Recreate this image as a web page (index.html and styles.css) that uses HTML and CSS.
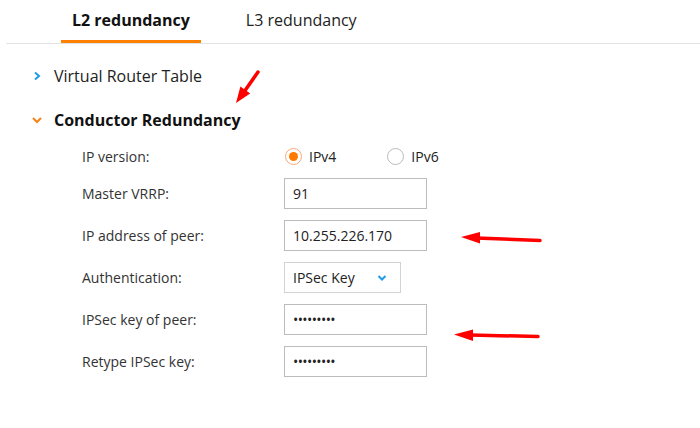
FILE: index.html
```html
<!DOCTYPE html>
<html lang="en">
<head>
    <meta charset="UTF-8">
    <meta name="viewport" content="width=device-width, initial-scale=1.0">
    <title>Redundancy</title>
    <link rel="stylesheet" href="styles.css">
</head>
<body>

<div class="tabs">
    <div class="tab active">L2 redundancy</div>
    <div class="tab">L3 redundancy</div>
</div>

<div class="section">
    <div class="section-head">
        <svg class="chevron" width="10" height="10" viewBox="0 0 10 10"><polyline points="3,1.5 7,5 3,8.5" fill="none" stroke="#1e9be9" stroke-width="2"/></svg>
        <span>Virtual Router Table</span>
    </div>
    <div class="section-head open">
        <svg class="chevron" width="10" height="10" viewBox="0 0 10 10"><polyline points="1,3 5,7 9,3" fill="none" stroke="#f7821b" stroke-width="2"/></svg>
        <span>Conductor Redundancy</span>
    </div>

    <div class="form">
        <div class="row radio-row">
            <label>IP version:</label>
            <div class="radios">
                <span class="radio checked"><span class="dot"></span></span><span class="radio-text">IPv4</span>
                <span class="radio"></span><span class="radio-text">IPv6</span>
            </div>
        </div>
        <div class="row">
            <label>Master VRRP:</label>
            <input type="text" class="field" value="91">
        </div>
        <div class="row">
            <label>IP address of peer:</label>
            <input type="text" class="field" value="10.255.226.170">
        </div>
        <div class="row">
            <label>Authentication:</label>
            <div class="select">
                <span>IPSec Key</span>
                <svg width="10" height="8" viewBox="0 0 10 8"><polyline points="1.5,2 5,5.5 8.5,2" fill="none" stroke="#1e9be9" stroke-width="2"/></svg>
            </div>
        </div>
        <div class="row">
            <label>IPSec key of peer:</label>
            <input type="password" class="field secret" value="123456789">
        </div>
        <div class="row">
            <label>Retype IPSec key:</label>
            <input type="password" class="field secret" value="123456789">
        </div>
    </div>
</div>

<svg class="marks" width="700" height="428" viewBox="0 0 700 428">
    <line x1="258" y1="72" x2="244" y2="92" stroke="#ff0000" stroke-width="3.5" stroke-linecap="round"/>
    <polygon points="236,103 240.4,86.4 250.2,93.4" fill="#ff0000"/>
    <line x1="540" y1="240.5" x2="476" y2="238" stroke="#ff0000" stroke-width="3.5" stroke-linecap="round"/>
    <polygon points="461,237 480,232 480,243.5" fill="#ff0000"/>
    <line x1="538" y1="336.5" x2="470" y2="335" stroke="#ff0000" stroke-width="3.5" stroke-linecap="round"/>
    <polygon points="454,334.5 473,329.5 473,341" fill="#ff0000"/>
</svg>

</body>
</html>
```

FILE: styles.css
```css
body {
    font-family: "Open Sans", Arial, sans-serif;
    margin: 0;
    padding: 0;
    background-color: white;
    color: #222;
    position: relative;
    width: 700px;
    height: 428px;
    overflow: hidden;
}
.tabs {
    display: flex;
    margin-left: 6px;
    padding-left: 55px;
    border-bottom: 1px solid #e3e3e3;
    gap: 34px;
}
.tab {
    padding: 8px 11px;
    line-height: 24px;
    font-size: 16px;
    color: #222;
    border-bottom: 3px solid transparent;
}
.tab.active {
    font-weight: bold;
    color: #111;
    border-bottom-color: #ff8000;
}
.section {
    margin-top: 10px;
}
.section-head {
    display: flex;
    align-items: center;
    padding: 10px 0 10px 32px;
    line-height: 24px;
    font-size: 16px;
    color: #222;
}
.section-head .chevron {
    margin-right: 12px;
}
.section-head.open {
    font-weight: bold;
    color: #111;
}
.form {
    display: flex;
    flex-direction: column;
    gap: 11px;
}
.row {
    display: grid;
    grid-template-columns: 202px auto;
    align-items: center;
    padding-left: 82px;
    height: 31px;
}
.row label {
    font-size: 14px;
    color: #333;
}
.radio-row {
    height: 28px;
    margin-bottom: -3px;
}
.radios {
    display: flex;
    align-items: center;
    padding-left: 1px;
}
.radio {
    width: 15px;
    height: 15px;
    border: 1px solid #bbb;
    border-radius: 50%;
    display: flex;
    align-items: center;
    justify-content: center;
}
.radio.checked {
    border-color: #f9a77a;
}
.radio .dot {
    width: 9px;
    height: 9px;
    border-radius: 50%;
    background-color: #ff7a00;
}
.radio-text {
    font-size: 14px;
    color: #222;
    margin-left: 7px;
    margin-right: 51px;
}
.field {
    box-sizing: border-box;
    width: 143px;
    height: 31px;
    border: 1px solid #bcbcbc;
    border-radius: 0;
    padding: 0 8px;
    font-family: "Open Sans", Arial, sans-serif;
    font-size: 14px;
    color: #222;
    outline: none;
}
.field.secret {
    letter-spacing: -0.6px;
}
.select {
    box-sizing: border-box;
    width: 117px;
    height: 31px;
    border: 1px solid #d3d3d3;
    display: flex;
    align-items: center;
    justify-content: space-between;
    padding: 0 13px 0 8px;
    font-size: 14px;
    color: #222;
}
.marks {
    position: absolute;
    left: 0;
    top: 0;
}
```
